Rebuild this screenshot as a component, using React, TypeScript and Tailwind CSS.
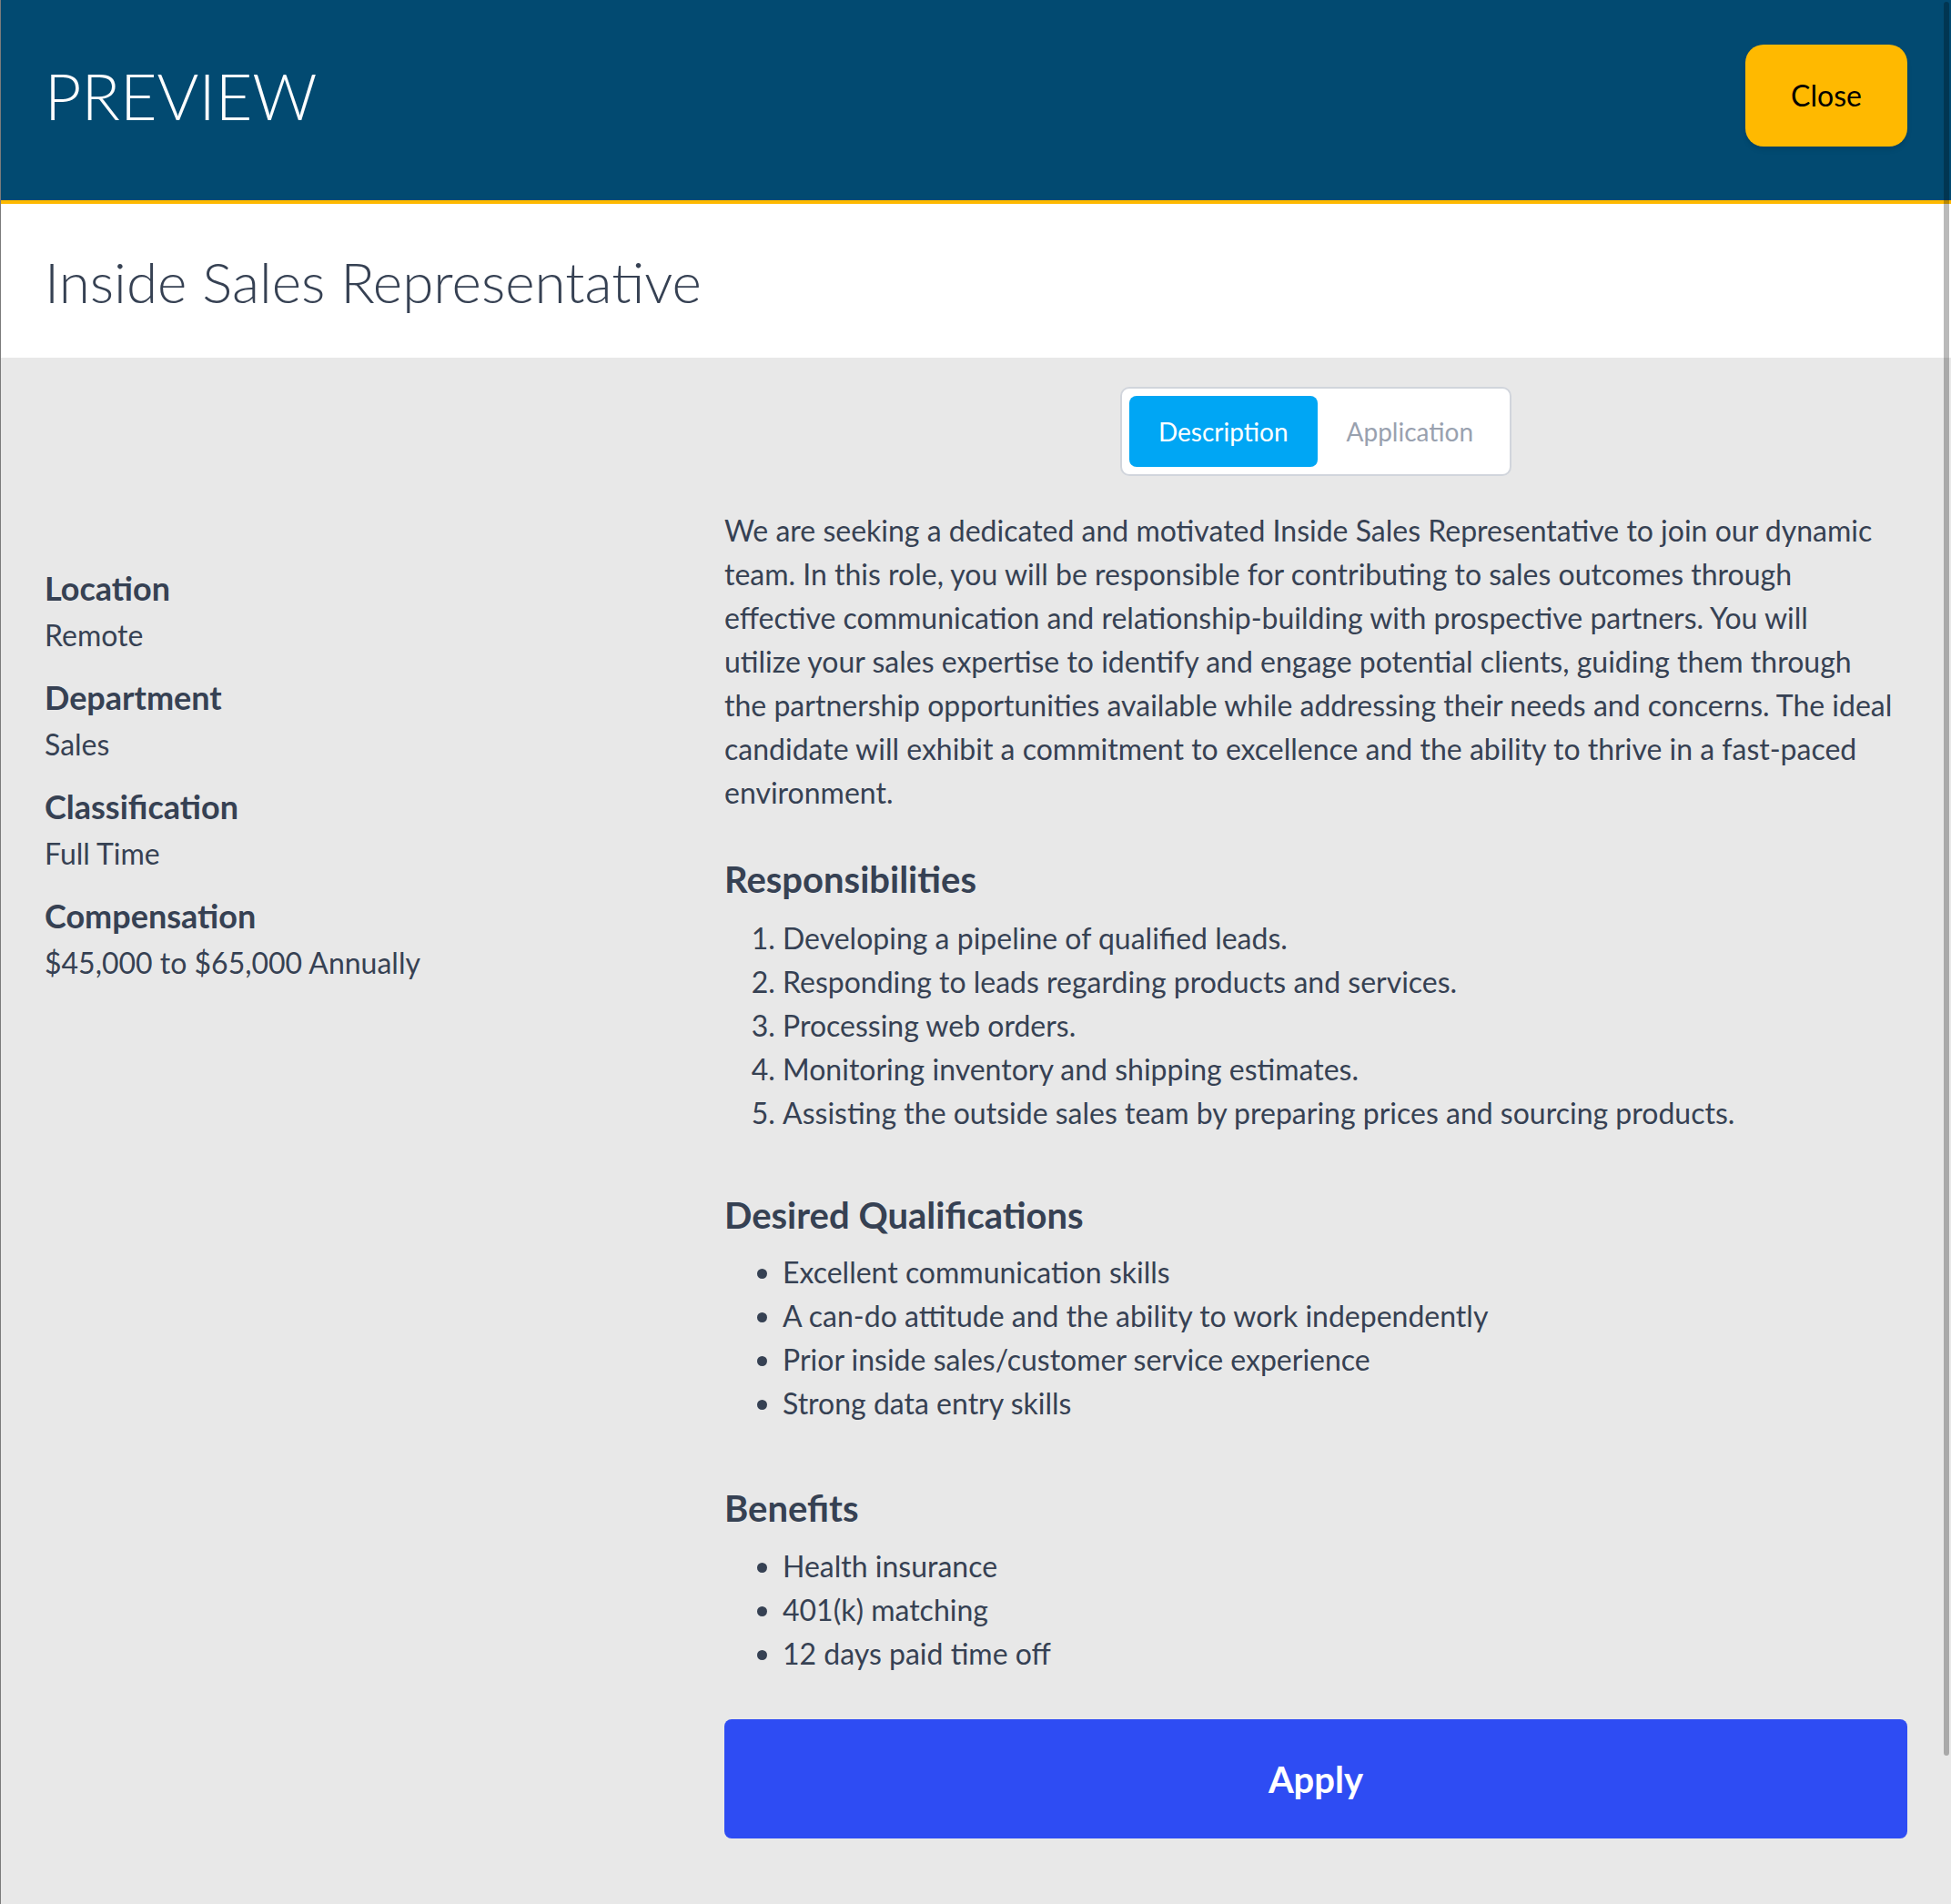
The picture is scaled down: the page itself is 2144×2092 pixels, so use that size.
const details = [
  { label: "Location", value: "Remote" },
  { label: "Department", value: "Sales" },
  { label: "Classification", value: "Full Time" },
  { label: "Compensation", value: "$45,000 to $65,000 Annually" },
];

const intro = [
  "We are seeking a dedicated and motivated Inside Sales Representative to join our dynamic",
  "team. In this role, you will be responsible for contributing to sales outcomes through",
  "effective communication and relationship-building with prospective partners. You will",
  "utilize your sales expertise to identify and engage potential clients, guiding them through",
  "the partnership opportunities available while addressing their needs and concerns. The ideal",
  "candidate will exhibit a commitment to excellence and the ability to thrive in a fast-paced",
  "environment.",
];

const responsibilities = [
  "Developing a pipeline of qualified leads.",
  "Responding to leads regarding products and services.",
  "Processing web orders.",
  "Monitoring inventory and shipping estimates.",
  "Assisting the outside sales team by preparing prices and sourcing products.",
];

const qualifications = [
  "Excellent communication skills",
  "A can-do attitude and the ability to work independently",
  "Prior inside sales/customer service experience",
  "Strong data entry skills",
];

const benefits = ["Health insurance", "401(k) matching", "12 days paid time off"];

const App = () => {
  return (
    <div className="relative flex min-h-[2270px] flex-col border-l border-[#7b7b7b] bg-[#e8e8e8] font-['Lato',sans-serif] text-gray-700">
      <header className="flex h-[224px] items-center justify-between border-b-4 border-amber-400 bg-sky-900 px-[48px] pb-[10px]">
        <h1 className="text-[70px] font-light leading-none text-white">PREVIEW</h1>
        <button className="h-[112px] w-[178px] rounded-[20px] bg-amber-400 text-[32px] text-black shadow-md">
          Close
        </button>
      </header>

      <div className="flex h-[169px] items-center bg-white px-[48px]">
        <h2 className="text-[62px] font-light leading-[72px]">Inside Sales Representative</h2>
      </div>

      <div className="flex px-[48px] pt-[32px] pb-[250px]">
        <aside className="w-[747px] shrink-0 pt-[193px]">
          <div className="flex flex-col gap-[16px]">
            {details.map((d) => (
              <div key={d.label}>
                <div className="text-[36px] font-bold leading-[56px]">{d.label}</div>
                <div className="text-[32px] leading-[48px]">{d.value}</div>
              </div>
            ))}
          </div>
        </aside>

        <main className="min-w-0 flex-1">
          <div className="flex justify-center">
            <div className="flex rounded-[10px] border-2 border-gray-300 bg-white p-[8px]">
              <button className="rounded-[8px] bg-sky-500 px-[32px] py-[19px] text-[28px] leading-[40px] text-white">
                Description
              </button>
              <button className="rounded-[8px] px-[32px] py-[19px] text-[28px] leading-[40px] text-gray-400">
                Application
              </button>
            </div>
          </div>

          <p className="mt-[36px] whitespace-nowrap text-[32px] leading-[48px]">
            {intro.map((line, i) => (
              <span key={i}>
                {line}
                {i < intro.length - 1 && <br />}
              </span>
            ))}
          </p>

          <section className="mt-[43px]">
            <h3 className="mb-[13px] text-[40px] font-bold leading-[56px]">Responsibilities</h3>
            <ol className="list-decimal pl-[64px] text-[32px] leading-[48px]">
              {responsibilities.map((r) => (
                <li key={r}>{r}</li>
              ))}
            </ol>
          </section>

          <section className="mt-[60px]">
            <h3 className="mb-[11px] text-[40px] font-bold leading-[56px]">Desired Qualifications</h3>
            <ul className="list-disc pl-[64px] text-[32px] leading-[48px]">
              {qualifications.map((q) => (
                <li key={q}>{q}</li>
              ))}
            </ul>
          </section>

          <section className="mt-[63px]">
            <h3 className="mb-[12px] text-[40px] font-bold leading-[56px]">Benefits</h3>
            <ul className="list-disc pl-[64px] text-[32px] leading-[48px]">
              {benefits.map((b) => (
                <li key={b}>{b}</li>
              ))}
            </ul>
          </section>

          <button className="mt-[48px] h-[131px] w-full rounded-[8px] bg-[#2e4cf3] text-[40px] font-bold text-white">
            Apply
          </button>
        </main>
      </div>

      {/* overlay scrollbar thumb */}
      <div className="fixed top-[2px] right-[2px] h-[1927px] w-[6px] rounded-[3px] bg-black/[0.27]" />
    </div>
  );
};

export default App;
